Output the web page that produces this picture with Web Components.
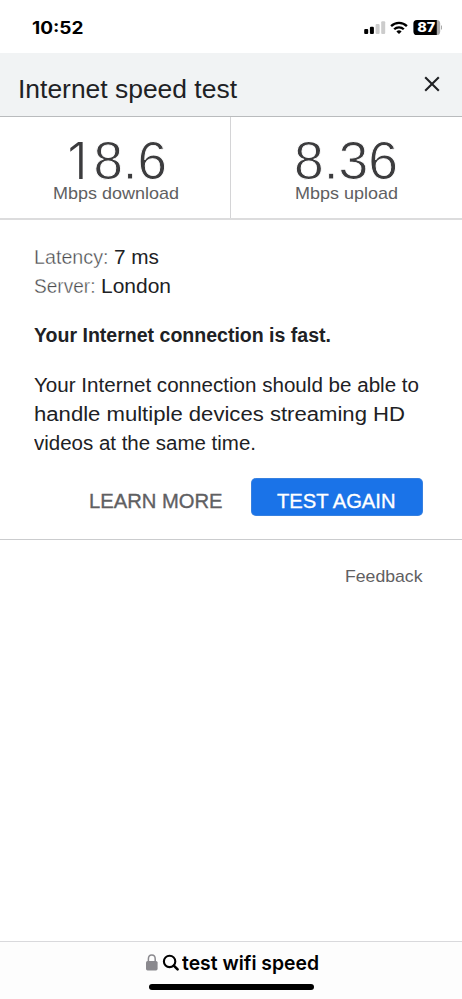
<!DOCTYPE html>
<html lang="en">
<head>
<meta charset="utf-8">
<meta name="viewport" content="width=device-width">
<title>Internet speed test</title>
<style>
html,body{margin:0;height:100%;background:#fff}
body{font-family:"Liberation Sans",Arial,sans-serif;color:#202124;overflow:hidden}
</style>
</head>
<body>
<speed-app></speed-app>
<script>
const define=(name,html,setup)=>customElements.define(name,class extends HTMLElement{
  connectedCallback(){
    if(this.shadowRoot)return;
    const t=document.createElement('template');
    t.innerHTML=html;
    this.attachShadow({mode:'open'}).append(t.content.cloneNode(true));
    if(setup)setup(this);
  }
});

/* A single line of text, condensed or expanded to a given width. */
define('fit-text',`<style>:host{display:block;white-space:nowrap}span{display:inline-block;transform-origin:0 50%}</style><span><slot></slot></span>`,el=>{
  const span=el.shadowRoot.querySelector('span');
  const target=parseFloat(el.getAttribute('width'));
  const natural=span.getBoundingClientRect().width;
  span.style.transform='scaleX('+(target/natural).toFixed(5)+')';
  span.style.marginRight=(target-natural)+'px';
  el.style.width=target+'px';
});

define('status-bar',`<style>
:host{display:flex;height:53px;box-sizing:border-box;padding:0 20px 0 32px;justify-content:space-between;align-items:flex-start;font-family:Inter,sans-serif;color:#000}
fit-text{margin-top:18px;font:700 17px/20px Inter,sans-serif}
svg{margin-top:18px;display:block}
</style>
<fit-text width="51.5">10:52</fit-text>
<svg width="79" height="20" viewBox="363 18 79 20">
<rect x="364.2" y="29" width="4" height="5" rx="1.1"/><rect x="369.9" y="26.8" width="4" height="7.2" rx="1.1"/>
<rect x="375.6" y="24" width="4" height="10" rx="1.1" fill="#ccc"/><rect x="381.2" y="21.2" width="4" height="12.8" rx="1.1" fill="#ccc"/>
<g fill="none" stroke="#000" stroke-width="2.3"><path d="M391.1 26.1a11.2 11.2 0 0 1 15.8 0"/><path d="M394.2 29.3a6.8 6.8 0 0 1 9.6 0"/></g>
<path d="M399 34.1l-2.6-2.7a3.8 3.8 0 0 1 5.2 0z"/>
<path d="M436.6 20h-.4v15h.4q3.6 0 3.6-3.6v-7.8q0-3.6-3.6-3.6z" fill="#aaa"/>
<path d="M441 25.2v4.6q1.4-.7 1.4-2.3t-1.4-2.3z" fill="#aaa"/>
<path d="M417 20h19.8v15H417q-3.6 0-3.6-3.6v-7.8q0-3.6 3.6-3.6z"/>
<text x="417.2" y="32.1" font-family="Inter,sans-serif" font-weight="800" font-size="12.8" textLength="18" lengthAdjust="spacingAndGlyphs" fill="#fff">87</text>
</svg>`);

define('title-bar',`<style>
:host{display:flex;box-sizing:border-box;height:64px;padding:21px 21px 0 17.5px;justify-content:space-between;align-items:flex-start;background:#f1f3f4;border-bottom:1px solid #b9bbbd}
fit-text{font-size:25px;line-height:30px}
svg{display:block;margin-top:1px}
</style><fit-text width="219"><slot></slot></fit-text>
<svg width="18" height="18"><path d="M2.2 2.2 15.8 15.8M15.8 2.2 2.2 15.8" stroke="#202124" stroke-width="2.1" fill="none"/></svg>`);

define('speed-stat',`<style>
:host{display:flex;flex-direction:column;align-items:center;box-sizing:border-box;padding-top:19px}
.v{font-size:53px;line-height:50px;-webkit-text-stroke:.9px #fff;color:#3c3c3e}
.one{display:inline-block;box-sizing:border-box;width:29.5px;padding-right:6px;text-align:right;font:300 51px/50px Inter,sans-serif;-webkit-text-stroke:0}
.l{font-size:17px;line-height:20px;color:#5f6062;margin-top:-2px}
</style>`,el=>{
  for(const [cls,key] of [['v','value'],['l','label']]){
    const line=document.createElement('fit-text');
    line.className=cls;
    /* The figure one is set without a foot serif. */
    line.innerHTML=el.getAttribute(key).replace(/1/g,'<span class="one">1</span>');
    line.setAttribute('width',el.getAttribute(key+'-width'));
    el.shadowRoot.append(line);
  }
});

define('info-row',`<style>
:host{display:flex;height:29px;line-height:29px;font-size:20px;gap:5.5px}
</style><slot></slot>`);

define('action-button',`<style>
:host{display:flex;box-sizing:border-box;height:38.5px;justify-content:center;padding-top:9px;font-size:20px;line-height:29px;color:#5f6062;-webkit-text-stroke:.35px currentColor}
:host([primary]){width:172.5px;padding-right:1px;background:#1a73e8;color:#fff;border-radius:5px;box-shadow:inset 0 0 0 1px #aab6c233}
</style><slot></slot>`);

define('search-bar',`<style>
:host{display:flex;flex-direction:column;align-items:center;box-sizing:border-box;height:58px;border-top:1px solid #d9d9dc;background:#fdfdfd;color:#000}
.q{display:flex;align-items:flex-start;height:42px;padding:7px 0 0 2px;box-sizing:border-box}
fit-text{font:600 20px/29px Inter,sans-serif}
.home{width:165px;height:6px;border-radius:3px;background:#000}
</style><div class="q"><svg width="37" height="29" viewBox="145 949 37 29">
<rect x="146" y="961" width="11.6" height="9.4" rx="1.6" fill="#8a898e"/><path d="M148.4 962v-3q0-4 3.4-4t3.4 4v3" fill="none" stroke="#8a898e" stroke-width="1.5"/>
<circle cx="169.6" cy="961.4" r="5.7" fill="none" stroke="#000" stroke-width="2.1"/><path d="M173.8 965.6l3.8 3.8" stroke="#000" stroke-width="2.6" stroke-linecap="round"/></svg>
<fit-text width="137"><slot></slot></fit-text></div><div class="home"></div>`);

define('speed-app',`<style>
:host{display:flex;flex-direction:column;height:999px;width:462px}
.stats{display:grid;grid-template-columns:231px 231px;height:103px;box-sizing:border-box;border-bottom:2px solid #dcdcdd}
speed-stat+speed-stat{border-left:1px solid #d4d4d6;margin-left:-1px;padding-right:1px}
.details{box-sizing:border-box;height:320px;padding:23px 39px 0 33.5px;border-bottom:1px solid #cbccce;display:flex;flex-direction:column}
.k{color:#4c4d4f;-webkit-text-stroke:.35px #fff}
h2{margin:20px 0 0;font-size:20px;line-height:29px}
.body{margin-top:21px;font-size:20px;line-height:29px}
.actions{display:flex;justify-content:flex-end;gap:28px;margin-top:19.5px}
.feedback{display:flex;justify-content:flex-end;padding:27px 39.5px 0 0;font-size:17px;line-height:20px;color:#5f6062;flex:1}
</style>
<status-bar></status-bar>
<title-bar>Internet speed test</title-bar>
<div class="stats"><speed-stat value="18.6" value-width="103" label="Mbps download" label-width="126"></speed-stat><speed-stat value="8.36" value-width="104" label="Mbps upload" label-width="103"></speed-stat></div>
<div class="details">
<info-row><fit-text class="k" width="74.5">Latency:</fit-text><fit-text width="45">7 ms</fit-text></info-row>
<info-row><fit-text class="k" width="61.5">Server:</fit-text><fit-text width="70">London</fit-text></info-row>
<h2><fit-text width="297">Your Internet connection is fast.</fit-text></h2>
<div class="body"><fit-text width="385">Your Internet connection should be able to</fit-text><fit-text width="371">handle multiple devices streaming HD</fit-text><fit-text width="222">videos at the same time.</fit-text></div>
<div class="actions"><action-button><fit-text width="133.5">LEARN MORE</fit-text></action-button><action-button primary><fit-text width="118.5">TEST AGAIN</fit-text></action-button></div>
</div>
<div class="feedback"><fit-text width="77.5">Feedback</fit-text></div>
<search-bar>test wifi speed</search-bar>`);
</script>
</body>
</html>
